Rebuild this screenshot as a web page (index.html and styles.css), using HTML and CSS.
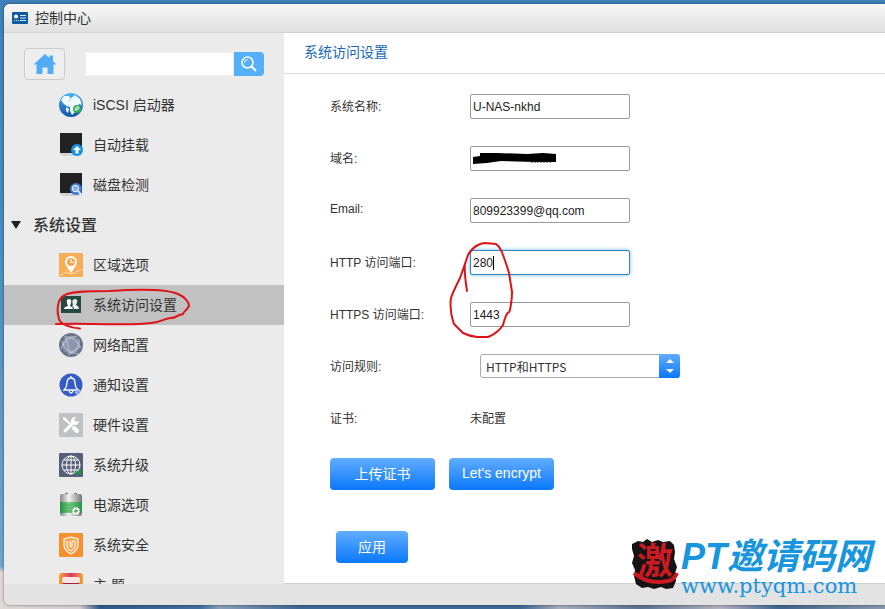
FILE: index.html
```html
<!DOCTYPE html>
<html lang="zh-CN">
  <head>
    <meta charset="UTF-8" />
    <meta name="viewport" content="width=device-width, initial-scale=1.0" />
    <title>控制中心</title>
    <link rel="stylesheet" href="styles.css">
  </head>
  <body>
    <div class="window">
      <header class="titlebar">
        <svg class="title-icon" width="16" height="12" viewBox="0 0 16 12">
          <rect width="16" height="12" rx="1" fill="#0e5c9f" />
          <circle cx="4" cy="4.500" r="2" fill="#fff" />
          <path d="M8 3.500h6M8 6h6M8 8.500h6M2 8.500h1M4 8.500h1M6 8.500h1" stroke="#d5ebfa" />
        </svg>
        <h1>控制中心</h1>
      </header>

      <div class="content">
        <aside class="sidebar">
          <div class="toolbar">
            <button type="button" class="home-btn" aria-label="主页">
              <svg width="24" height="22" viewBox="0 0 24 22" fill="#52adf6">
                <path d="M12 1 0.500 11.500h3V21h6v-6.500h5V21h6v-9.500h3L20 8V2.500h-3.500V5z" />
              </svg>
            </button>
            <form class="search">
              <input type="text" aria-label="搜索" />
              <button type="button" aria-label="搜索">
                <svg width="16" height="16" viewBox="0 0 16 16" fill="none" stroke="#fff">
                  <circle cx="6.500" cy="6.500" r="5.500" stroke-width="1.500" />
                  <path d="M3.500 6.500a3 3 0 0 1 3-3" />
                  <path d="m10.500 10.500 4.500 4.500" stroke-width="2" />
                </svg>
              </button>
            </form>
          </div>

          <nav class="menu">
            <a href="#" class="menu-item">
              <svg viewBox="0 0 24 24">
                <defs>
                  <linearGradient id="globe" x2="0" y2="1"><stop stop-color="#47b5f2" /><stop offset="1" stop-color="#1551a8" /></linearGradient>
                </defs>
                <circle cx="12" cy="12" r="12" fill="url(#globe)" />
                <path d="M2 7l3-4 5 0 2 3-3 3 0 3-3 0-2-2zM12 5l4-3 5 4 2 6-3-1-2 3-3 1 1 4-3 3-2-4 0-4-4-1 0-4 4-1zM7 14l3 2-1 4-2-2z" fill="#f1faff" />
                <circle cx="18" cy="16" r="4" fill="#35a857" />
                <path d="M16 17q0-4 4-3 0 4-4 3l3-2" stroke="#d9f6df" fill="none" />
              </svg>
              <span>iSCSI 启动器</span>
            </a>
            <a href="#" class="menu-item">
              <svg viewBox="0 0 24 24">
                <path d="M1 0h22v20H1z" fill="#222" />
                <path d="M1 20h22l-2 3H3z" fill="#d4d4d4" />
                <circle cx="18" cy="17" r="6" fill="#1493e6" />
                <path d="M18 13l-4 4h2.500v3.500h3V17H22z" fill="#fff" />
              </svg>
              <span>自动挂载</span>
            </a>
            <a href="#" class="menu-item">
              <svg viewBox="0 0 24 24">
                <path d="M1 0h22v20H1z" fill="#222" />
                <path d="M1 20h22l-2 3H3z" fill="#d4d4d4" />
                <circle cx="17" cy="16" r="6" fill="#3c7bd4" />
                <circle cx="16.500" cy="15.500" r="3.200" fill="#7fb3ee" stroke="#fff" />
                <path d="m19 18 4 4" stroke="#cfe3fb" stroke-width="2" />
              </svg>
              <span>磁盘检测</span>
            </a>

            <h2 class="menu-group">
              <svg width="10" height="8" viewBox="0 0 10 8"><path d="M0 0h10L5 8z" fill="#222" /></svg>
              <span>系统设置</span>
            </h2>

            <a href="#" class="menu-item">
              <svg viewBox="0 0 24 24">
                <rect width="24" height="24" rx="1" fill="#f8ac55" />
                <path d="M1 23l6-4 5 2 5-2 6-3" stroke="#fde0b8" fill="none" />
                <path d="M12 20Q6 12 6 9a6 6 0 0 1 12 0q0 3-6 11z" fill="#fff" />
                <circle cx="12" cy="9" r="4" fill="#f8a548" />
                <path d="M12 6v3.500h3" stroke="#fff" fill="none" />
              </svg>
              <span>区域选项</span>
            </a>
            <a href="#" class="menu-item active">
              <svg viewBox="0 0 24 24">
                <rect x="2" y="3" width="20" height="17" fill="#28493f" />
                <path d="M5 16q0-2 4-3-3-7 1-7t1 7q3 1 3 3z" fill="#fff" />
                <path d="M15 16q0-2-2-3l1-1q-2-6 2-6t1 6q3 1 3 4z" fill="#e8eeec" />
              </svg>
              <span>系统访问设置</span>
              <svg class="mark mark-menu" viewBox="0 0 142 46">
                <path d="M30 43.500C20 43 10 39 9 34 6 24 8 13 15 10 22 6 42 6 60 6c30-2 56-2 68 3 7 3 11 8 11 12-2 4-5 5-6 8-6 1-7 4-12 4-7 0-8 4-20 5-20 3-48 0-95 1" />
              </svg>
            </a>
            <a href="#" class="menu-item">
              <svg viewBox="0 0 24 24">
                <circle cx="12" cy="12" r="12" fill="#687488" />
                <circle cx="12" cy="12" r="9" fill="#8b97ac" />
                <path d="M5 4q10-2 17 11M2 16Q5 5 18 3M3 8q3 12 17 13M9 22q12-5 11-16M7 5l4 15 10-6" stroke="#ced6e2" stroke-width=".7" fill="none" />
              </svg>
              <span>网络配置</span>
            </a>
            <a href="#" class="menu-item">
              <svg viewBox="0 0 24 24">
                <circle cx="12" cy="12" r="11.500" fill="#345cc3" />
                <path d="M5 17q3-3 3-7 0-5 4-5t4 5q0 4 3 7zM12 3v2M10 18q2 4 4 0" stroke="#fff" stroke-width="1.300" fill="none" />
                <circle cx="19" cy="19" r="2.500" fill="#8ba5e4" stroke="#dce5fb" stroke-dasharray="2 1" />
              </svg>
              <span>通知设置</span>
            </a>
            <a href="#" class="menu-item">
              <svg viewBox="0 0 24 24">
                <rect width="24" height="24" rx="1" fill="#bfc1c4" />
                <path d="M6 6l7 7" stroke="#fff" stroke-width="2" />
                <path d="M15 15l3 3" stroke="#fff" stroke-width="4" stroke-linecap="round" />
                <path d="M6 18 15 9" stroke="#fff" stroke-width="3" stroke-linecap="round" />
                <path d="M17 4a4 4 0 1 0 3 4l-3 1-2-2z" fill="#fff" />
                <path d="M4 4l3 1 1 3-2 0-2-2z" fill="#fff" />
              </svg>
              <span>硬件设置</span>
            </a>
            <a href="#" class="menu-item">
              <svg viewBox="0 0 24 24">
                <rect width="24" height="24" rx="1" fill="#566079" />
                <g fill="none" stroke="#fff">
                  <circle cx="12" cy="12" r="9" />
                  <ellipse cx="12" cy="12" rx="4.500" ry="9" />
                  <path d="M12 3v18M3 12h18M5 7h14M5 17h14" />
                </g>
                <path d="M14 21l8-5v5z" fill="#229447" />
              </svg>
              <span>系统升级</span>
            </a>
            <a href="#" class="menu-item">
              <svg viewBox="0 0 24 24">
                <defs>
                  <linearGradient id="metal"><stop stop-color="#888" /><stop offset=".4" stop-color="#f2f2f2" /><stop offset="1" stop-color="#777" /></linearGradient>
                  <linearGradient id="cell"><stop stop-color="#278b45" /><stop offset=".4" stop-color="#76cd83" /><stop offset="1" stop-color="#27934b" /></linearGradient>
                </defs>
                <rect x="1" y="1" width="22" height="22" rx="2" fill="url(#metal)" />
                <path d="M6 .500h3M15 .500h3" stroke="#777" />
                <path d="M1 9h22v11H1z" fill="url(#cell)" />
                <path d="M2 12h10M2 15h10M2 18h10" stroke="#2d9a4c" stroke-width=".6" />
                <circle cx="17" cy="18" r="2.500" fill="#5aa56b" stroke="#fff" stroke-width="1.500" />
                <circle cx="17" cy="18" r="3.600" fill="none" stroke="#fff" stroke-dasharray="1.500 1.300" />
              </svg>
              <span>电源选项</span>
            </a>
            <a href="#" class="menu-item">
              <svg viewBox="0 0 24 24">
                <rect width="24" height="24" rx="1" fill="#f6912f" />
                <path d="M12 4l7 2v7q-1 5-7 8-6-3-7-8V6z" stroke="#fff" stroke-width="1.200" fill="#f8a652" />
                <path d="M8 8v5q0 3 4 5 4-2 4-5V8h-3v5q0 1-1 1t-1-1V8" stroke="#fff" fill="none" />
              </svg>
              <span>系统安全</span>
            </a>
            <a href="#" class="menu-item">
              <svg viewBox="0 0 24 24">
                <defs>
                  <linearGradient id="theme"><stop stop-color="#f6a52c" /><stop offset=".5" stop-color="#d93869" /><stop offset="1" stop-color="#f3a933" /></linearGradient>
                </defs>
                <rect width="24" height="24" rx="3" fill="url(#theme)" />
                <rect x="3" y="4" width="18" height="6" rx="2" fill="#fae4e4" />
                <path d="M4 10h16v8H4z" fill="#9b2342" />
              </svg>
              <span>主 题</span>
            </a>
          </nav>
        </aside>

        <main class="panel">
          <h2 class="panel-title">系统访问设置</h2>
          <form class="settings">
            <div class="row">
              <label for="sysname">系统名称:</label>
              <div class="field"><input type="text" id="sysname" value="U-NAS-nkhd" /></div>
            </div>
            <div class="row">
              <label for="domain">域名:</label>
              <div class="field">
                <input type="text" id="domain" />
                <svg class="redacted" viewBox="0 0 84 12">
                  <path d="M0 4l7-1V0h17l30 1 16-1 13 1v8H62l-34-1-14 2-14 1z" />
                  <path d="M58 9h21" stroke="#333" stroke-dasharray="2 1" />
                </svg>
              </div>
            </div>
            <div class="row">
              <label for="email">Email:</label>
              <div class="field"><input type="text" id="email" value="809923399@qq.com" /></div>
            </div>
            <div class="row">
              <label for="http">HTTP 访问端口:</label>
              <div class="field">
                <input type="text" id="http" class="focused" value="280" />
                <span class="caret"></span>
                <svg class="mark mark-ports" viewBox="0 0 70 102">
                  <path d="M21 51Q18 32 19 24l3-9Q26 8 32 5q4-2 7-2l11 1q5 4 7 11 4 11 6 18l3 19q0 6-1 12-1 7-2 8-3 1-6 13-5 8-15 12H31q-8-1-14-4L8 84Q5 75 5 70q-1-6 0-12 1-4 9-20Q18 27 22 15" />
                </svg>
              </div>
            </div>
            <div class="row">
              <label for="https">HTTPS 访问端口:</label>
              <div class="field"><input type="text" id="https" value="1443" /></div>
            </div>
            <div class="row">
              <label for="rule">访问规则:</label>
              <div class="select-wrap">
                <select id="rule">
                  <option>HTTP和HTTPS</option>
                </select>
                <svg class="select-arrows" width="21" height="24" viewBox="0 0 21 24">
                  <path d="M7 9h8l-4-4zM7 15h8l-4 4z" fill="#fff" />
                </svg>
              </div>
            </div>
            <div class="row">
              <span class="label">证书:</span>
              <span class="value">未配置</span>
            </div>

            <div class="cert-buttons">
              <button type="button" class="btn">上传证书</button>
              <button type="button" class="btn">Let's encrypt</button>
            </div>
            <button type="button" class="btn btn-apply">应用</button>
          </form>
        </main>
      </div>
      <footer class="statusbar"></footer>

      <div class="watermark">
        <svg class="seal" width="48" height="52" viewBox="0 0 48 52">
          <path d="M1 5l6-3 5 1 4-3 5 3 6-2 5 2 7-1 4 4 1 7-1 7 3 8-2 6 1 8-3 7-7 1-5-2-7 2-6-2-6 1-6-4-2-8 1-6-3-7 2-7-2-7z" fill="#171314" />
          <text x="6" y="35" class="seal-text">激</text>
          <path d="M3 34q14 12 34 8 6-1 9-8" stroke="#c81b22" stroke-width="4" fill="none" />
        </svg>
        <div class="brand">
          <strong>PT邀请码网</strong>
          <span>www.ptyqm.com</span>
        </div>
      </div>
    </div>
  </body>
</html>
```
FILE: styles.css
```css
:root {
  --blue: #1b69b6;
  --side: #ebebeb;
  --text: #333;
  --line: #dcdcdc;
  --btn: linear-gradient(#62adff, #0a78fb);
  --mark: #dc1419;
}

* {
  margin: 0;
  padding: 0;
  box-sizing: border-box;
}

body {
  height: 100vh;
  padding: 4px 0 4px 4px;
  overflow: hidden;
  font-family: "Liberation Sans", "Noto Sans CJK SC", sans-serif;
  font-size: 12px;
  color: var(--text);
  background:
    linear-gradient(90deg, #e0d8d8 0, #d5cdd2 80px, #2e5a8a 100px, #416f9e 200px, #8ba0bb 220px, #3d6795 300px, #3d6795 520px, #a9aebd 560px, #5a7292 640px, #b5b4c2 720px, #40648d 780px, #8c9ab0 100%) bottom / 100% 4px no-repeat,
    linear-gradient(#3f82ba, #4a8bbd 35%, #72a6cb 93%, #e2d8d8 94%);
}

input,
select,
button {
  font: inherit;
  color: inherit;
}

.window {
  position: relative;
  display: flex;
  flex-direction: column;
  height: 100%;
  border-radius: 6px 0 0 6px;
  overflow: hidden;
  background: var(--side);
  box-shadow: 0 0 3px rgba(0, 0, 0, 0.5);
}

.titlebar {
  display: flex;
  align-items: center;
  gap: 7px;
  height: 29px;
  padding: 0 8px;
  background: linear-gradient(#f8f8f8, #e0e0e0);
  border-bottom: 1px solid #d2d2d2;
}

.titlebar h1 {
  padding-bottom: 2px;
  font-size: 14px;
  font-weight: 400;
}

.content {
  display: flex;
  flex: 1;
  min-height: 0;
}

.sidebar {
  width: 280px;
  flex-shrink: 0;
  overflow: hidden;
}

.toolbar {
  display: flex;
  align-items: center;
  gap: 20px;
  height: 52px;
  padding: 10px 20px 0;
}

.home-btn {
  display: flex;
  align-items: center;
  justify-content: center;
  flex-shrink: 0;
  width: 41px;
  height: 32px;
  border: 1px solid #ccc;
  border-radius: 4px;
  background: #eee;
}

.search {
  display: flex;
  flex: 1;
  min-width: 0;
  height: 24px;
}

.search input {
  flex: 1;
  min-width: 0;
  border: 1px solid #f0f0f0;
  background: #fff;
}

.search button {
  display: flex;
  align-items: center;
  justify-content: center;
  flex-shrink: 0;
  width: 30px;
  border: none;
  border-radius: 0 4px 4px 0;
  background: #55aff9;
}

.menu-item {
  position: relative;
  display: flex;
  align-items: center;
  gap: 10px;
  height: 40px;
  padding-left: 55px;
  font-size: 14px;
  color: var(--text);
  text-decoration: none;
}

.menu-item span,
.menu-group span {
  padding-bottom: 2px;
}

.menu-item svg {
  width: 24px;
  height: 24px;
}

.menu-item.active {
  background: #c1c1c1;
}

.menu-group {
  display: flex;
  align-items: center;
  gap: 12px;
  height: 40px;
  padding-left: 7px;
  font-size: 16px;
  font-weight: 500;
}

.mark {
  position: absolute;
  z-index: 1;
  fill: none;
  stroke: var(--mark);
  stroke-width: 2;
  stroke-linejoin: round;
  stroke-linecap: round;
  pointer-events: none;
}

.menu-item .mark-menu {
  left: 46px;
  top: 0;
  width: 142px;
  height: 46px;
}

.mark-ports {
  left: -24px;
  top: -10px;
  width: 70px;
  height: 102px;
}

.panel {
  flex: 1;
  background: #fff;
  border-bottom: 1px solid #d0d0d0;
}

.panel-title {
  height: 41px;
  padding-left: 20px;
  font-size: 14px;
  font-weight: 400;
  line-height: 38px;
  color: var(--blue);
  border-bottom: 1px solid var(--line);
}

.settings {
  padding: 6px 46px;
}

.row {
  display: flex;
  align-items: center;
  height: 52px;
}

.row label,
.row .label {
  width: 140px;
  padding-bottom: 2px;
}

.row .value {
  padding-bottom: 2px;
}

.field {
  position: relative;
}

.field input {
  display: block;
  width: 160px;
  height: 25px;
  padding: 2px 2px 0;
  color: #222;
  background: #fff;
  border: 1px solid #999;
  border-radius: 2px;
}

.field .focused {
  border-color: #2f86c5;
  box-shadow: 0 0 4px #7cbcf0;
}

.caret {
  position: absolute;
  left: 23px;
  top: 6px;
  width: 1px;
  height: 14px;
  background: #000;
}

.redacted {
  position: absolute;
  left: 3px;
  top: 7px;
  width: 84px;
  height: 12px;
}

.select-wrap {
  position: relative;
  margin-left: 10px;
}

.select-wrap select {
  display: block;
  width: 200px;
  height: 24px;
  padding: 0 26px 0 5px;
  font-family: "Noto Sans CJK SC", sans-serif;
  appearance: none;
  background: #fff;
  border: 1px solid #aaa;
  border-radius: 3px;
}

.select-arrows {
  position: absolute;
  right: 0;
  top: 0;
  border-radius: 0 3px 3px 0;
  background: var(--btn);
  pointer-events: none;
}

.cert-buttons {
  display: flex;
  gap: 14px;
  margin-top: 14px;
}

.btn {
  width: 105px;
  height: 32px;
  padding-bottom: 2px;
  font-size: 14px;
  color: #fff;
  border: none;
  border-radius: 4px;
  background: var(--btn);
}

.btn-apply {
  width: 72px;
  margin: 41px 0 0 6px;
}

.statusbar {
  height: 21px;
  background: #e3e3e3;
}

.watermark {
  position: absolute;
  right: 14px;
  bottom: 8px;
  display: flex;
  align-items: flex-start;
  gap: 2px;
  color: #1795dd;
}

.seal-text {
  font-family: "Noto Sans CJK SC", sans-serif;
  font-size: 36px;
  font-weight: 700;
  fill: #c81b22;
}

.brand {
  display: flex;
  flex-direction: column;
}

.brand strong {
  font-size: 36px;
  font-style: italic;
  line-height: 36px;
}

.brand span {
  font-family: "DejaVu Serif", serif;
  font-size: 21px;
  line-height: 22px;
}
```
